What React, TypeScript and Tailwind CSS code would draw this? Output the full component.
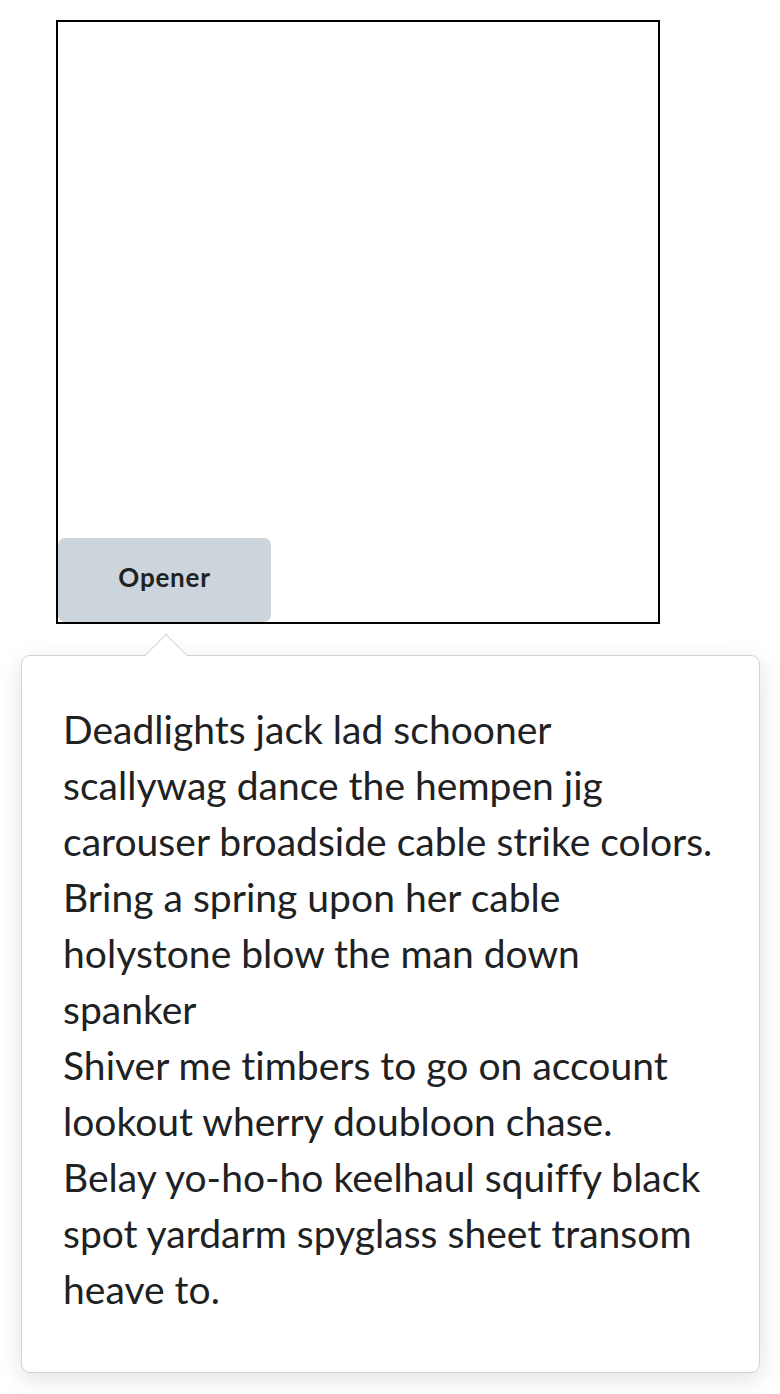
export default function App() {
  return (
    <main className="min-h-screen bg-white" style={{ fontFamily: 'Lato, "Noto Sans", sans-serif' }}>
      <div className="pt-5 pl-[56px]">
        <div className="w-[604px] h-[604px] border-2 border-black flex flex-col justify-end">
          <button className="w-[213px] h-[84px] rounded-[7px] bg-[#cdd5dc] text-[#202122] text-[26px] tracking-[0.03em] font-bold pb-1.5">
            Opener
          </button>
        </div>
      </div>
      <div className="pl-[21px] pt-[31px]">
        <div className="relative w-[739px] h-[718px] bg-white border border-[#cdd5dc] rounded-[9px] shadow-[0_6px_24px_rgba(0,0,0,0.12)] px-[41px] pt-[45px] text-[#202122] text-[39px] leading-[56px] tracking-[0.02px] [font-variant-ligatures:none]">
          <span className="absolute -top-[16px] left-[129px] w-[30px] h-[30px] rotate-45 bg-white border-l border-t border-[#cdd5dc]" />
          <p>Deadlights jack lad schooner scallywag dance the hempen jig carouser broadside cable strike colors.</p>
          <p>Bring a spring upon her cable holystone blow the man down spanker</p>
          <p>Shiver me timbers to go on account lookout wherry doubloon chase.</p>
          <p>Belay yo-ho-ho keelhaul squiffy black spot yardarm spyglass sheet transom heave to.</p>
        </div>
      </div>
    </main>
  )
}
